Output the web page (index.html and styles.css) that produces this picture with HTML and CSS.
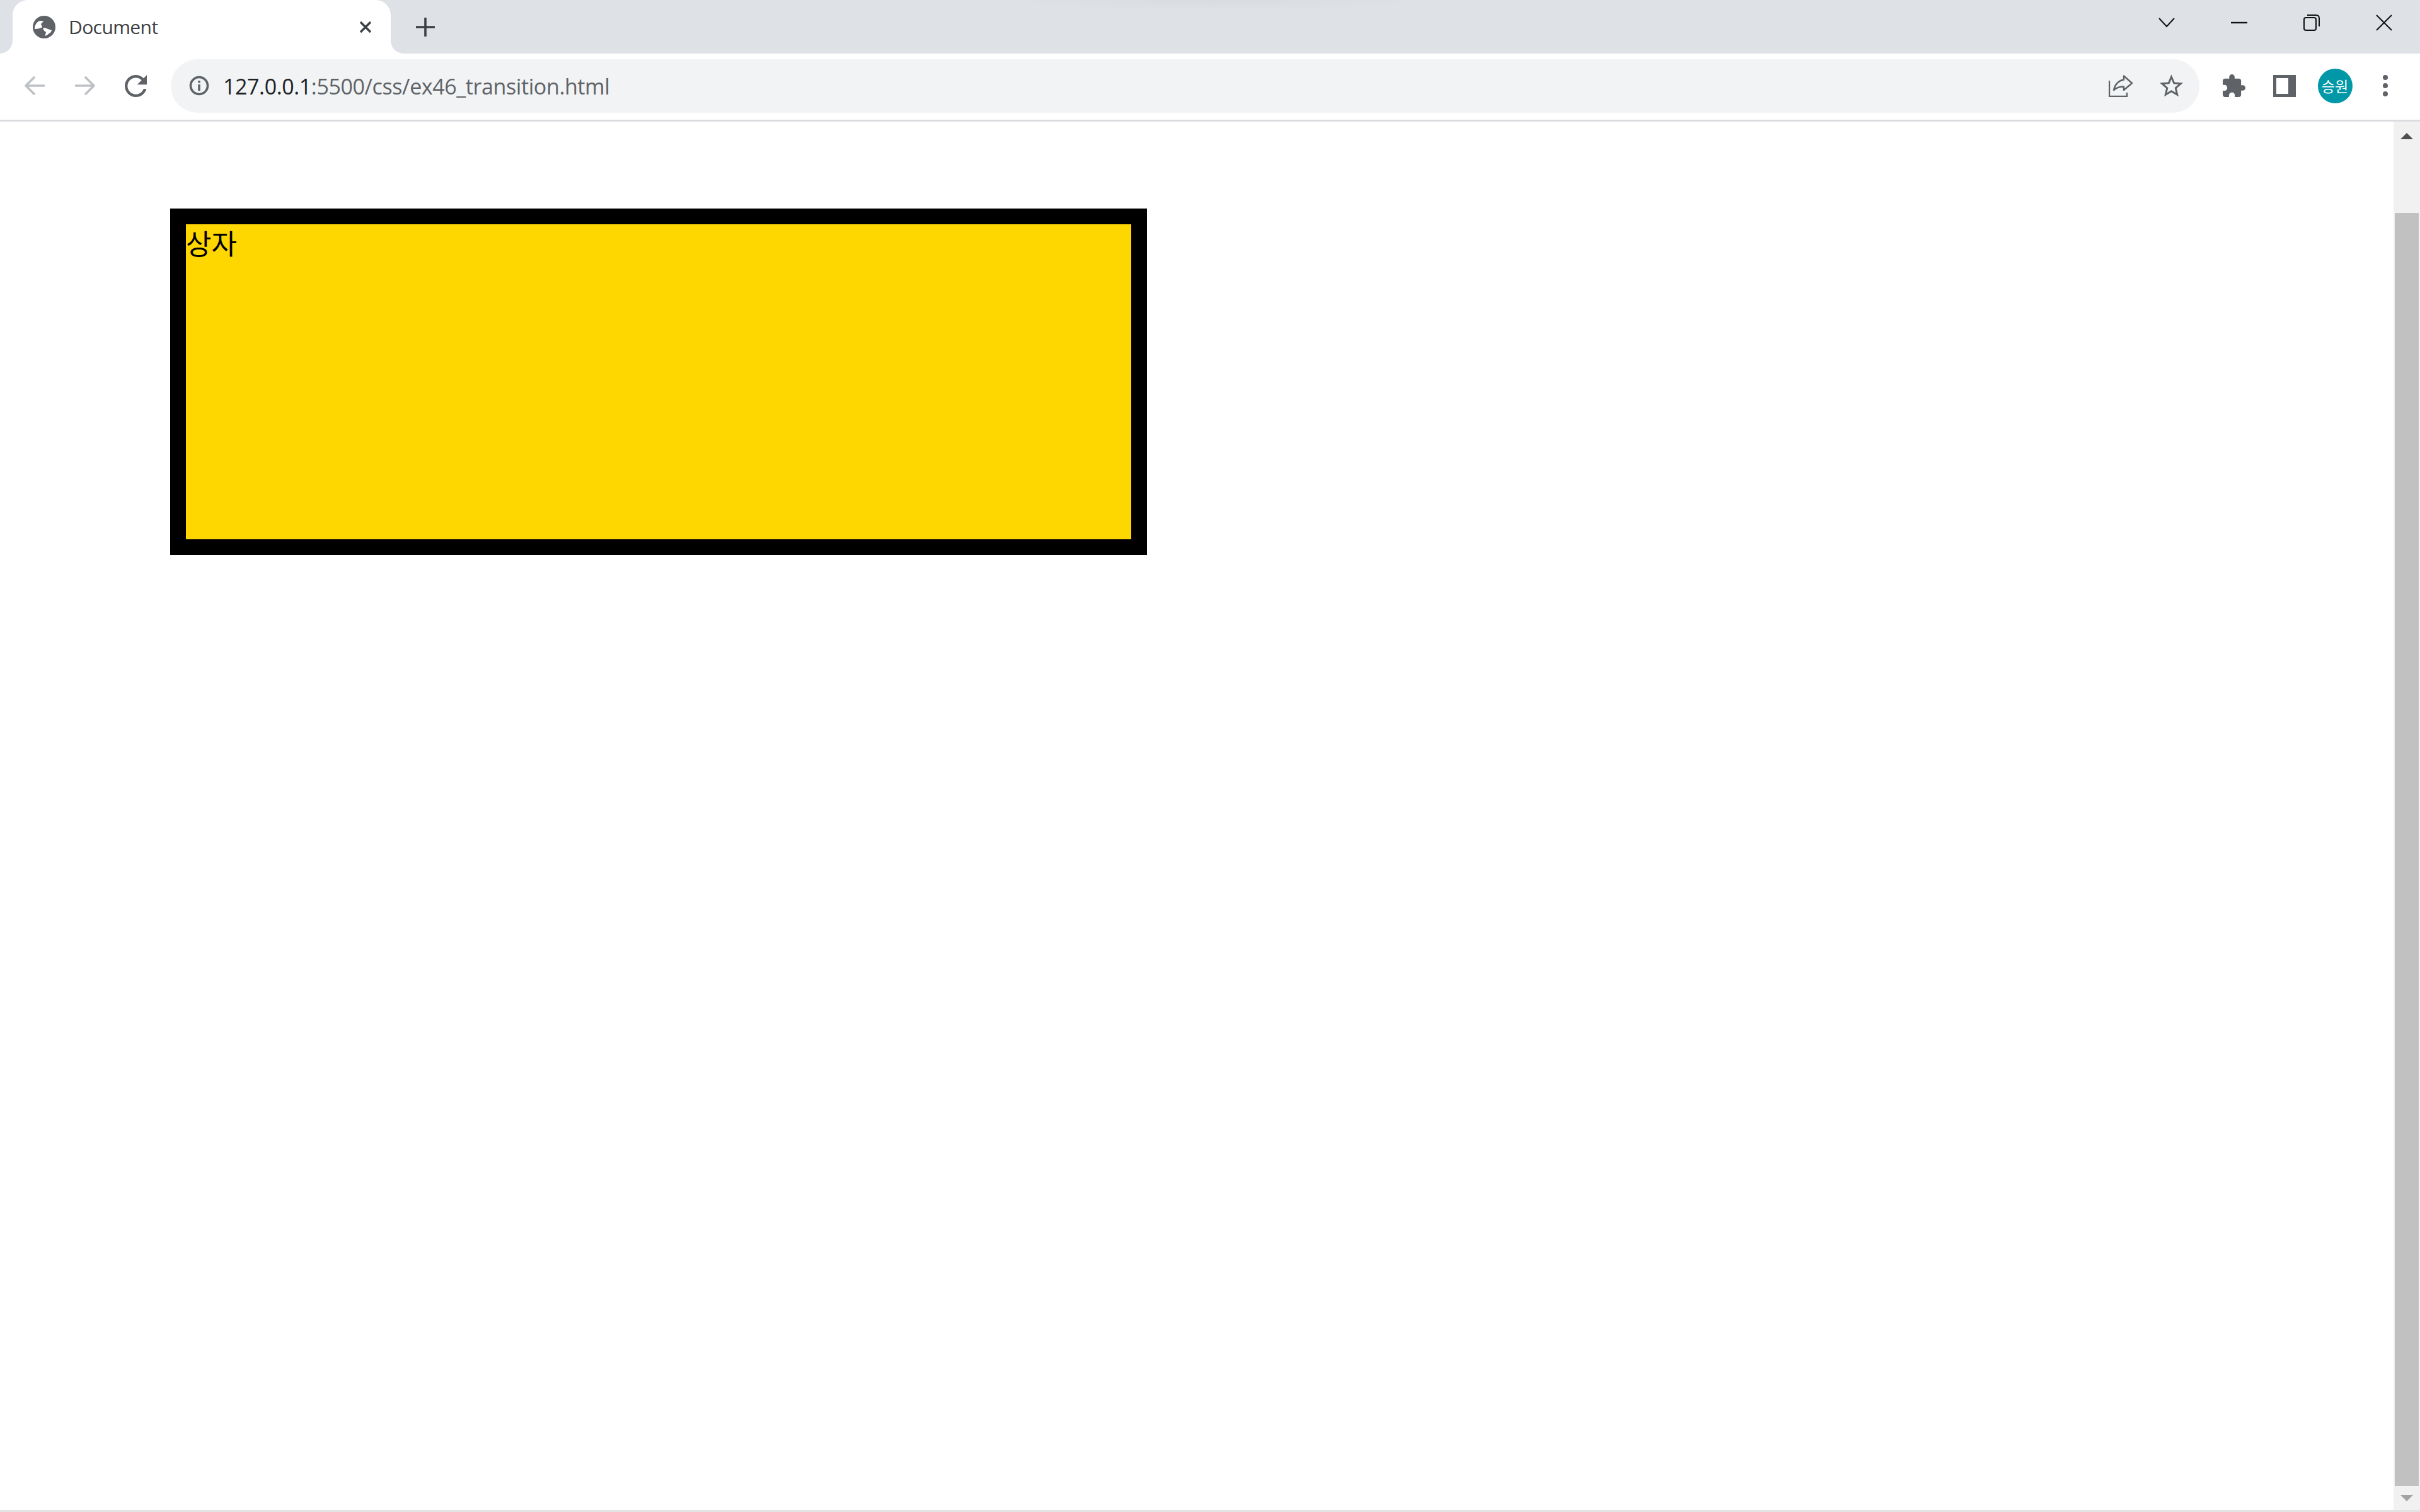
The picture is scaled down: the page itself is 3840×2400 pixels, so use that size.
FILE: index.html
```html
<!DOCTYPE html>
<html lang="ko">
<head>
    <meta charset="UTF-8" />
    <meta name="viewport" content="width=device-width, initial-scale=1.0" />
    <title>Document</title>
    <link rel="stylesheet" href="styles.css">
</head>
<body>
    <div class="tab-strip">
        <div class="strip-glow"></div>
        <div class="tab">
            <svg class="globe" viewBox="0 0 36 36">
                <circle cx="18" cy="18" r="18" fill="#5f6368" />
                <path d="M3 21C3 15 6 10 11 8c2 0 4 0 6 1l-4 4c0 2 2 3 2 5-2 2-7 3-12 3z" fill="#fff" />
                <path d="M16 20c3-2 6 0 8 1 2 1 4 1 6 2-1 3-2 4-4 5-2 2-4 3-6 4-1-2 1-4 1-6-2-1-4-3-5-6z" fill="#fff" />
            </svg>
            <span class="tab-title">Document</span>
            <svg class="tab-close" viewBox="0 0 20 20">
                <path d="M2 2l16 16M18 2L2 18" fill="none" stroke="#3c4043" stroke-width="3.4" />
            </svg>
        </div>
        <div class="new-tab">
            <svg class="plus" viewBox="0 0 30 30">
                <path d="M15 1v28M1 15h28" fill="none" stroke="#3c4043" stroke-width="3.6" stroke-linecap="round" />
            </svg>
        </div>
        <div class="win-btn win-first">
            <svg class="chevron" viewBox="0 0 26 16">
                <path d="M1 1l12 13L25 1" fill="none" stroke="#111" stroke-width="2" />
            </svg>
        </div>
        <div class="win-btn">
            <svg class="win-icon" viewBox="0 0 26 26">
                <path d="M0 13h26" fill="none" stroke="#111" stroke-width="2.4" />
            </svg>
        </div>
        <div class="win-btn">
            <svg class="win-icon" viewBox="0 0 26 26">
                <rect x="1" y="5" width="19" height="20" rx="3" fill="none" stroke="#111" stroke-width="2" />
                <path d="M6 1h14c3 0 5 2 5 5v13" fill="none" stroke="#111" stroke-width="2" />
            </svg>
        </div>
        <div class="win-btn">
            <svg class="win-icon" viewBox="0 0 26 26">
                <path d="M1 1l24 24M25 1L1 25" fill="none" stroke="#111" stroke-width="2" />
            </svg>
        </div>
    </div>

    <div class="toolbar">
        <div class="tool-btn">
            <svg class="arrow" viewBox="0 0 32 30">
                <path d="M15 2L2 15l13 13M2 15h29" fill="none" stroke="#bdc1c6" stroke-width="3.6" stroke-linecap="round" stroke-linejoin="round" />
            </svg>
        </div>
        <div class="tool-btn">
            <svg class="arrow" viewBox="0 0 32 30">
                <path d="M17 2l13 13-13 13M30 15H1" fill="none" stroke="#bdc1c6" stroke-width="3.6" stroke-linecap="round" stroke-linejoin="round" />
            </svg>
        </div>
        <div class="tool-btn">
            <svg class="reload" viewBox="4 4 16 16">
                <path fill="#5f6368" d="M17.65 6.35C16.2 4.9 14.21 4 12 4c-4.42 0-7.99 3.58-7.99 8s3.57 8 7.99 8c3.73 0 6.84-2.55 7.73-6h-2.08c-.82 2.33-3.04 4-5.65 4-3.31 0-6-2.69-6-6s2.69-6 6-6c1.66 0 3.14.69 4.22 1.78L13 11h7V4l-2.35 2.35z" />
            </svg>
        </div>

        <div class="omnibox">
            <svg class="info" viewBox="0 0 32 32">
                <circle cx="16" cy="16" r="13.5" fill="none" stroke="#5f6368" stroke-width="3.6" />
                <path d="M16 14v10M16 8v3.5" fill="none" stroke="#5f6368" stroke-width="3.6" />
            </svg>
            <span class="url"><span class="url-host">127.0.0.1</span>:5500/css/ex46_transition.html</span>
            <div class="omni-btn omni-first">
                <svg class="share" viewBox="0 0 38 35">
                    <path d="M1 9v25h28v-6" fill="none" stroke="#5f6368" stroke-width="2.4" />
                    <path d="M24 1.500l13 11.500-13 11v-5.500c-6 0-11 1-16 5.500 2-9 8-15 16-16.500z" fill="none" stroke="#5f6368" stroke-width="2.4" stroke-linejoin="round" />
                </svg>
            </div>
            <div class="omni-btn">
                <svg class="star" viewBox="2 2 20 19.270">
                    <path fill="#5f6368" d="M22 9.240l-7.190-.62L12 2 9.190 8.630 2 9.240l5.460 4.730L5.820 21 12 17.270 18.180 21l-1.630-7.030L22 9.240zM12 15.400l-3.760 2.270 1-4.280-3.320-2.880 4.380-.38L12 6.100l1.710 4.040 4.380.38-3.320 2.880 1 4.280L12 15.400z" />
                </svg>
            </div>
        </div>

        <div class="tool-btn tool-first">
            <svg class="puzzle" viewBox="2 1 21 21">
                <path fill="#5f6368" d="M20.500 11H19V7c0-1.100-.9-2-2-2h-4V3.500C13 2.120 11.880 1 10.500 1S8 2.120 8 3.500V5H4c-1.100 0-1.990.9-1.990 2v3.800H3.500c1.490 0 2.700 1.210 2.700 2.700s-1.210 2.700-2.700 2.700H2V20c0 1.100.9 2 2 2h3.800v-1.500c0-1.490 1.210-2.700 2.700-2.700 1.490 0 2.700 1.210 2.700 2.700V22H17c1.100 0 2-.9 2-2v-4h1.500c1.380 0 2.500-1.120 2.500-2.500S21.880 11 20.500 11z" />
            </svg>
        </div>
        <div class="tool-btn">
            <div class="side-panel"></div>
        </div>
        <div class="tool-btn">
            <div class="avatar">승원</div>
        </div>
        <div class="tool-btn">
            <div class="kebab">
                <span class="dot"></span>
                <span class="dot"></span>
                <span class="dot"></span>
            </div>
        </div>
    </div>

    <div class="viewport">
        <main class="page">
            <div class="box">상자</div>
        </main>
        <div class="scrollbar">
            <div class="scroll-up"><span class="tri-up"></span></div>
            <div class="scroll-thumb"></div>
            <div class="scroll-down"><span class="tri-down"></span></div>
        </div>
    </div>
    <div class="bottom-line"></div>
</body>
</html>
```

FILE: styles.css
```css
* {
    box-sizing: border-box;
}

html, body {
    margin: 0;
    height: 2400px;
    overflow: hidden;
}

body {
    display: flex;
    flex-direction: column;
    background-color: #ffffff;
    font-family: "Open Sans", "Noto Sans CJK KR", sans-serif;
}

svg {
    display: block;
}

/* tab strip */
.tab-strip {
    position: relative;
    display: flex;
    align-items: stretch;
    height: 85px;
    padding-left: 20px;
    background-color: #dee1e6;
}

.strip-glow {
    position: absolute;
    top: 0;
    left: 1590px;
    width: 680px;
    height: 16px;
    background: radial-gradient(ellipse 50% 100% at 50% 0, #d8dbe0, #dee1e6);
}

.tab {
    position: relative;
    display: flex;
    align-items: center;
    width: 600px;
    padding: 0 30px 0 32px;
    background-color: #ffffff;
    border-radius: 24px 24px 0 0;
}

.tab::before,
.tab::after {
    content: "";
    position: absolute;
    bottom: 0;
    width: 20px;
    height: 20px;
}

.tab::before {
    left: -20px;
    background: radial-gradient(circle at 0 0, #dee1e6 19.5px, #ffffff 20px);
}

.tab::after {
    right: -20px;
    background: radial-gradient(circle at 100% 0, #dee1e6 19.5px, #ffffff 20px);
}

.globe {
    width: 36px;
    height: 36px;
}

.tab-title {
    flex: 1;
    margin-left: 21px;
    font-size: 30px;
    letter-spacing: -0.6px;
    color: #3c4043;
}

.tab-close {
    width: 20px;
    height: 20px;
}

.new-tab {
    display: flex;
    align-items: center;
    justify-content: center;
    width: 70px;
    margin-left: 20px;
}

.plus {
    width: 30px;
    height: 30px;
}

.win-btn {
    display: flex;
    align-items: center;
    justify-content: center;
    width: 115px;
    height: 72px;
}

.win-first {
    margin-left: auto;
}

.chevron {
    width: 26px;
    height: 16px;
}

.win-icon {
    width: 26px;
    height: 26px;
}

/* toolbar */
.toolbar {
    display: flex;
    align-items: center;
    height: 108px;
    padding: 0 15px 3px;
    background-color: #ffffff;
    border-bottom: 3px solid #dadce0;
}

.tool-btn {
    display: flex;
    align-items: center;
    justify-content: center;
    width: 80px;
    height: 85px;
}

.tool-first {
    margin-left: 15px;
}

.arrow {
    width: 32px;
    height: 30px;
}

.reload {
    width: 35px;
    height: 35px;
}

.omnibox {
    flex: 1;
    display: flex;
    align-items: center;
    height: 85px;
    margin-left: 16px;
    padding: 0 5px 0 29px;
    background-color: #f1f3f4;
    border-radius: 43px;
}

.info {
    width: 32px;
    height: 32px;
}

.url {
    margin-left: 22px;
    padding-top: 2px;
    font-size: 34px;
    letter-spacing: -0.4px;
    color: #5f6368;
}

.url-host {
    color: #202124;
}

.omni-btn {
    display: flex;
    align-items: center;
    justify-content: center;
    width: 80px;
    height: 85px;
}

.omni-first {
    margin-left: auto;
}

.share {
    width: 38px;
    height: 35px;
}

.star {
    width: 37px;
    height: 36px;
}

.puzzle {
    width: 36px;
    height: 36px;
}

.side-panel {
    width: 36px;
    height: 35px;
    background-color: #ffffff;
    border: 5px solid #5f6368;
    border-right-width: 12px;
}

.avatar {
    display: flex;
    align-items: center;
    justify-content: center;
    width: 55px;
    height: 55px;
    border-radius: 50%;
    background-color: #0097a7;
    color: #ffffff;
    font-size: 23px;
}

.kebab {
    display: flex;
    flex-direction: column;
    gap: 5px;
}

.dot {
    width: 8px;
    height: 8px;
    border-radius: 50%;
    background-color: #5f6368;
}

/* page content */
.viewport {
    flex: 1;
    display: flex;
    min-height: 0;
}

.page {
    flex: 1;
    padding: 138px 0 0 270px;
    background-color: #ffffff;
}

.box {
    width: 1550px;
    height: 550px;
    background-color: #ffd700;
    border: 25px solid #000000;
    font-family: "Noto Sans CJK KR", sans-serif;
    font-size: 44px;
    line-height: 58px;
    color: #000000;
}

.scrollbar {
    display: flex;
    flex-direction: column;
    width: 42px;
    background-color: #f1f1f1;
}

.scroll-up {
    display: flex;
    justify-content: center;
    align-items: center;
    height: 45px;
}

.scroll-down {
    display: flex;
    justify-content: center;
    align-items: center;
    height: 38px;
}

.scroll-thumb {
    flex: 1;
    margin: 100px 2px 0;
    background-color: #c1c1c1;
}

.tri-up {
    border-left: 10px solid transparent;
    border-right: 10px solid transparent;
    border-bottom: 10px solid #505050;
}

.tri-down {
    border-left: 10px solid transparent;
    border-right: 10px solid transparent;
    border-top: 10px solid #a3a3a3;
}

.bottom-line {
    height: 3px;
    background-color: #e3e3e3;
}
```
